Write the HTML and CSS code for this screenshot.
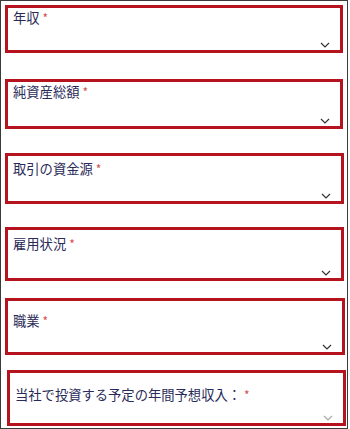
FILE: index.html
```html
<!DOCTYPE html>
<html lang="ja">
<head>
<meta charset="utf-8">
<link rel="stylesheet" href="styles.css">
</head>
<body>
<div class="frame">
  <div class="field f1">
    <div class="label">年収 <span class="req">*</span></div>
    <svg class="chev" width="10" height="6" viewBox="0 0 10 6"><path d="M1 1 L5 5 L9 1" fill="none" stroke="#333" stroke-width="1.2"/></svg>
  </div>
  <div class="field f2">
    <div class="label">純資産総額 <span class="req">*</span></div>
    <svg class="chev" width="10" height="6" viewBox="0 0 10 6"><path d="M1 1 L5 5 L9 1" fill="none" stroke="#333" stroke-width="1.2"/></svg>
  </div>
  <div class="field f3">
    <div class="label">取引の資金源 <span class="req">*</span></div>
    <svg class="chev" width="10" height="6" viewBox="0 0 10 6"><path d="M1 1 L5 5 L9 1" fill="none" stroke="#333" stroke-width="1.2"/></svg>
  </div>
  <div class="field f4">
    <div class="label">雇用状況 <span class="req">*</span></div>
    <svg class="chev" width="10" height="6" viewBox="0 0 10 6"><path d="M1 1 L5 5 L9 1" fill="none" stroke="#333" stroke-width="1.2"/></svg>
  </div>
  <div class="field f5">
    <div class="label">職業 <span class="req">*</span></div>
    <svg class="chev" width="10" height="6" viewBox="0 0 10 6"><path d="M1 1 L5 5 L9 1" fill="none" stroke="#333" stroke-width="1.2"/></svg>
  </div>
  <div class="field f6">
    <div class="label">当社で投資する予定の年間予想収入： <span class="req">*</span></div>
    <svg class="chev" width="10" height="6" viewBox="0 0 10 6"><path d="M1 1 L5 5 L9 1" fill="none" stroke="#aaa" stroke-width="1.2"/></svg>
  </div>
</div>
</body>
</html>
```
FILE: styles.css
```css
html, body {
  margin: 0;
  padding: 0;
  background: #ffffff;
}
body {
  font-family: "Noto Sans CJK JP", "Noto Sans", sans-serif;
  width: 350px;
  height: 429px;
  overflow: hidden;
}
.frame {
  box-sizing: border-box;
  width: 348px;
  height: 429px;
  border: 1px solid #3a3a3a;
  display: flex;
  flex-direction: column;
  overflow: hidden;
}
.field {
  box-sizing: border-box;
  border: 3px solid #b5141f;
  margin-left: 4px;
  width: 338px;
  display: flex;
  flex-direction: column;
  padding: 0 10px 2px 5px;
  flex-shrink: 0;
}
.label {
  font-size: 13.3px;
  line-height: 16px;
  color: #2a2a58;
  white-space: nowrap;
}
.req {
  color: #d05050;
  font-size: 12px;
}
.chev {
  display: block;
  margin-top: auto;
  align-self: flex-end;
}
.f1 { margin-top: 4px; height: 48px; padding-top: 2px; }
.f2 { margin-top: 26px; height: 50px; padding-top: 2px; }
.f3 { margin-top: 24px; height: 51px; width: 339px; padding-top: 5px; }
.f4 { margin-top: 23px; height: 54px; width: 339px; padding-top: 6px; }
.f5 { margin-top: 17px; height: 57px; width: 340px; padding-top: 12px; }
.f6 { margin-top: 15px; height: 56px; width: 339px; margin-left: 6px; padding-top: 14px; padding-bottom: 2px; }
```
